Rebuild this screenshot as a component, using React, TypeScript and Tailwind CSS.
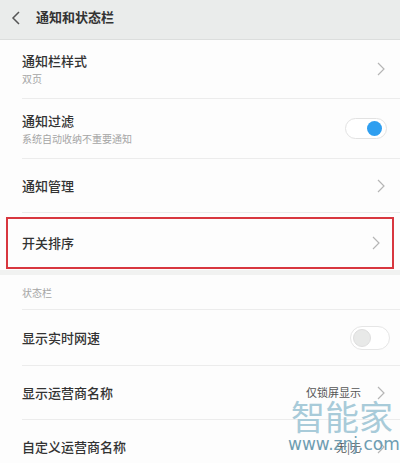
import React from 'react';

const font = { fontFamily: '"Noto Sans CJK SC", "Noto Sans", sans-serif' };

function Chevron() {
  return (
    <svg width="8" height="14" viewBox="0 0 8 14" className="shrink-0">
      <path d="M1 1l6 6-6 6" fill="none" stroke="#b5b5b5" strokeWidth="1.2" />
    </svg>
  );
}

function ToggleOn() {
  return (
    <div className="w-[42px] h-[21px] rounded-full border border-[#e2e2e2] bg-white flex items-center justify-end pr-[4px]">
      <div className="w-[15px] h-[15px] rounded-full bg-[#2f9ff0]" />
    </div>
  );
}

function ToggleOff() {
  return (
    <div className="w-[40px] h-[24px] rounded-full border border-[#e6e6e6] bg-white flex items-center pl-[2px]">
      <div className="w-[18px] h-[18px] rounded-full bg-[#e8e9e8] border border-[#dedede]" />
    </div>
  );
}

function Row({ title, sub, right, h, divider = true }: { title: string; sub?: string; right?: React.ReactNode; h: string; divider?: boolean }) {
  return (
    <div className={`${h} flex items-center pl-[22px]`}>
      <div className={`flex-1 h-full flex items-center pr-[15px] ${divider ? 'border-b border-[#ececec]' : ''}`}>
        <div className="flex-1">
          <div className="text-[13px] leading-[18px] font-medium text-[#333]">{title}</div>
          {sub && <div className="text-[10px] leading-[14px] text-[#a5a5a5] mt-[2px]">{sub}</div>}
        </div>
        {right}
      </div>
    </div>
  );
}

export default function App() {
  return (
    <div className="w-[400px] h-[463px] overflow-hidden bg-[#fdfdfd] relative" style={font}>
      {/* header */}
      <div className="h-[40px] bg-[#eaeceb] border-b border-[#dcdedd] flex items-start pt-[8px] pl-[11px]">
        <svg width="9" height="14" viewBox="0 0 9 14" className="mt-[3px]">
          <path d="M8 1L2 7l6 6" fill="none" stroke="#555" strokeWidth="1.5" />
        </svg>
        <span className="ml-[16px] text-[13px] leading-[18px] font-bold text-[#333]">通知和状态栏</span>
      </div>

      <Row h="h-[59px]" title="通知栏样式" sub="双页" right={<Chevron />} />
      <Row h="h-[60px]" title="通知过滤" sub="系统自动收纳不重要通知" right={<div className="mr-[-2px]"><ToggleOn /></div>} />
      <Row h="h-[54px]" title="通知管理" right={<Chevron />} />

      <div className="h-[57px] pt-[4px] pb-[1px] px-[6px]">
        <div className="h-full border-2 border-[#d8373f] flex items-center pl-[14px] pr-[12px]">
          <span className="flex-1 text-[13px] text-[#333] font-medium">开关排序</span>
          <Chevron />
        </div>
      </div>

      <div className="h-[5px] bg-[#f1f2f1]" />

      <div className="h-[35px] pl-[22px]">
        <div className="h-full border-b border-[#ececec] flex items-center">
          <span className="text-[10px] text-[#a5a5a5]">状态栏</span>
        </div>
      </div>

      <Row h="h-[56px]" title="显示实时网速" right={<div className="mr-[-5px]"><ToggleOff /></div>} />
      <Row
        h="h-[54px]"
        title="显示运营商名称"
        right={
          <div className="flex items-center gap-[16px]">
            <span className="text-[11px] text-[#555]">仅锁屏显示</span>
            <Chevron />
          </div>
        }
      />
      <Row
        h="h-[54px]"
        divider={false}
        title="自定义运营商名称"
        right={
          <div className="flex items-center gap-[16px]">
            <span className="text-[11px] text-[#555]">无|无</span>
            <Chevron />
          </div>
        }
      />

      {/* watermark */}
      <div className="absolute z-10 left-[288px] top-[398px] w-[108px] pointer-events-none">
        <div className="text-[34px] leading-[36px] text-[#a8cbd9] text-center">智能家</div>
        <div className="text-[17px] leading-[20px] text-[#6f9db2] text-center whitespace-nowrap" style={{ fontFamily: '"DejaVu Sans", sans-serif' }}>
          www.znj.com
        </div>
      </div>
    </div>
  );
}
